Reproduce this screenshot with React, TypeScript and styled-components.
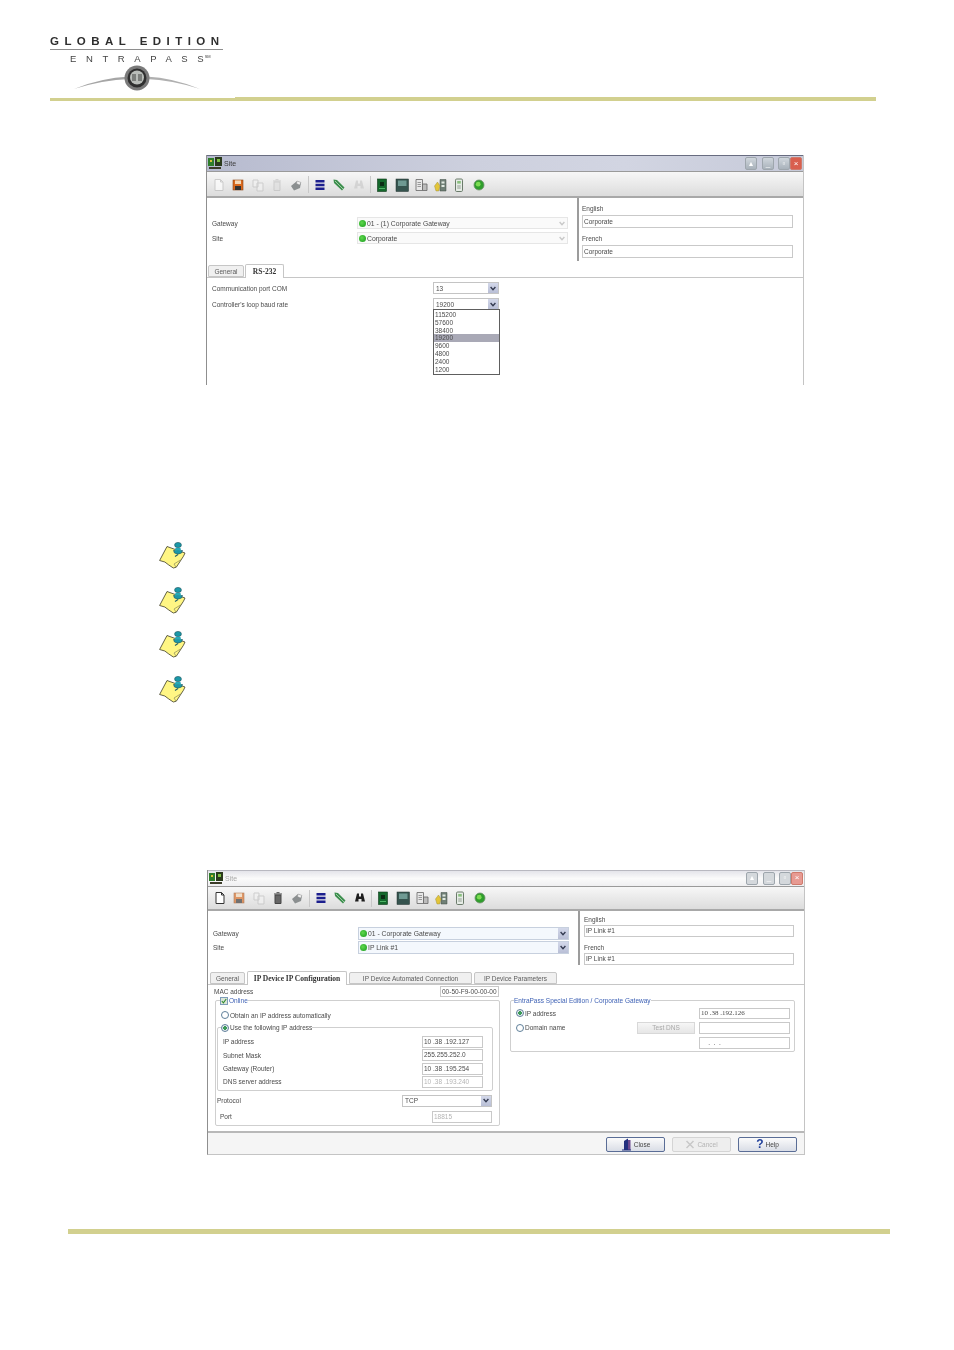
import React from "react";
import styled, { createGlobalStyle } from "styled-components";

const GlobalStyle = createGlobalStyle`
  html, body { margin: 0; padding: 0; background: #fff; }
`;

const Page = styled.div`
  width: 954px;
  height: 1350px;
  display: flex;
  flex-direction: column;
  background: #fff;
  overflow: hidden;
  font-family: "Liberation Sans", Arial, sans-serif;
`;

/* ---------- header ---------- */
const Header = styled.header`
  padding: 35px 78px 0 50px;
`;

const Logo = styled.div`
  width: 173px;
  height: 62px;
  display: flex;
  flex-direction: column;
  align-items: center;
  filter: blur(0.45px);
  color: #2e2e2e;
`;

const LogoTop = styled.div`
  width: 100%;
  height: 14px;
  line-height: 13px;
  font-size: 11.5px;
  font-weight: 700;
  letter-spacing: 5.45px;
  white-space: nowrap;
  border-bottom: 1px solid #8e8e8e;
`;

const LogoName = styled.div`
  margin-top: 3px;
  width: 100%;
  box-sizing: border-box;
  padding-left: 20px;
  height: 11px;
  line-height: 11px;
  font-size: 9.5px;
  letter-spacing: 9.6px;
  white-space: nowrap;
  color: #444;
`;

const LogoLastLetter = styled.span`
  letter-spacing: 1px;
`;

const LogoTm = styled.sup`
  font-size: 4px;
  letter-spacing: 0;
  vertical-align: 4px;
  line-height: 0;
`;

const LogoMark = styled.svg`
  width: 130px;
  height: 33px;
`;

const HeaderRule = styled.div`
  display: flex;
  align-items: flex-end;
`;

const RuleLeft = styled.div`
  width: 185px;
  height: 3px;
  background: #d2d08f;
`;

const RuleRight = styled.div`
  flex: 1;
  height: 4px;
  background: #d2d08f;
`;

const FooterRule = styled.div`
  margin: 74px 0 0 68px;
  width: 822px;
  height: 5px;
  background: #d2d08f;
`;

/* ---------- window frame ---------- */
const Window = styled.section<{ $left: number; $top: number; $height: number; $closed?: boolean }>`
  margin: ${(p) => p.$top}px 0 0 ${(p) => p.$left}px;
  width: 598px;
  height: ${(p) => p.$height}px;
  box-sizing: border-box;
  flex-shrink: 0;
  display: flex;
  flex-direction: column;
  background: #fff;
  border-left: 1px solid #8f8f8f;
  border-right: 1px solid #c4c4c4;
  border-bottom: ${(p) => (p.$closed ? "1px solid #c4c4c4" : "none")};
  filter: blur(0.5px);
  font-size: 6.5px;
  color: #4a4a4a;
`;

const TitleBar = styled.div<{ $inactive?: boolean }>`
  height: 17px;
  flex-shrink: 0;
  box-sizing: border-box;
  display: flex;
  align-items: center;
  padding: 0 1px;
  border-top: 1px solid ${(p) => (p.$inactive ? "#b8b8c0" : "#686c80")};
  border-bottom: 1px solid #9a9a9a;
  background: ${(p) =>
    p.$inactive
      ? "linear-gradient(#e4e4ea, #fafafa 50%, #efeff1)"
      : "linear-gradient(90deg, #b7bbcf, #cdd0de 45%, #d2d5e2 70%, #c6cad9)"};
`;

const TitleText = styled.span<{ $inactive?: boolean }>`
  margin-left: 2px;
  flex: 1;
  font-size: 7px;
  color: ${(p) => (p.$inactive ? "#a8a8a8" : "#3c3c3c")};
`;

const WinButtons = styled.div`
  display: flex;
  align-items: center;
`;

const WinButton = styled.span<{ $close?: boolean; $gap: number; $inactive?: boolean }>`
  display: flex;
  align-items: center;
  justify-content: center;
  width: 12px;
  height: 13px;
  margin-left: ${(p) => p.$gap}px;
  box-sizing: border-box;
  border: 1px solid ${(p) => (p.$close ? "#cf7a6c" : "#9ea6ad")};
  border-radius: 2px;
  background: ${(p) =>
    p.$close
      ? p.$inactive
        ? "#e79a92"
        : "#d95f4e"
      : p.$inactive
        ? "#d4d8dc"
        : "linear-gradient(#cfd6dc, #a9b2bb)"};
  color: #fff;
  font-size: 8px;
  line-height: 1;
`;

const Toolbar = styled.div<{ $height: number }>`
  height: ${(p) => p.$height}px;
  flex-shrink: 0;
  box-sizing: border-box;
  display: flex;
  align-items: center;
  padding: 1px 0 0 2.5px;
  border-bottom: 2px solid #a8a8a8;
  background: linear-gradient(#f7f7f7, #dcdcdc);
`;

const ToolSlot = styled.span`
  width: 19.3px;
  height: 16px;
  display: flex;
  align-items: center;
  justify-content: center;
  flex-shrink: 0;
`;

const ToolDivider = styled.span`
  width: 1px;
  height: 17px;
  margin: 0 1.7px;
  background: #c8c8c8;
`;

const TopArea = styled.div<{ $height: number }>`
  height: ${(p) => p.$height}px;
  flex-shrink: 0;
  display: grid;
  grid-template-columns: 370px 1fr;
`;

const EntityForm = styled.div<{ $top: number; $gap: number }>`
  padding: ${(p) => p.$top}px 0 0 5px;
  display: grid;
  grid-template-columns: 145px 211px;
  grid-auto-rows: min-content;
  row-gap: ${(p) => p.$gap}px;
  align-items: center;
`;

const NameColumn = styled.div<{ $top: number; $inset: number }>`
  padding: ${(p) => p.$top}px 0 0 ${(p) => p.$inset}px;
  border-left: 2px solid #9c9c9c;
  margin-bottom: 2px;
`;

const NameLabel = styled.div<{ $after: number; $before?: number }>`
  height: 9px;
  line-height: 9px;
  margin: ${(p) => p.$before ?? 0}px 0 ${(p) => p.$after}px;
`;

const TextInput = styled.div<{
  $width?: number;
  $height?: number;
  $disabled?: boolean;
  $serif?: boolean;
}>`
  width: ${(p) => (p.$width ? `${p.$width}px` : "auto")};
  height: ${(p) => p.$height ?? 13}px;
  line-height: ${(p) => (p.$height ?? 13) - 2}px;
  box-sizing: border-box;
  padding: 0 1px;
  background: #fff;
  border: 1px solid #c9c9c9;
  white-space: nowrap;
  overflow: hidden;
  color: ${(p) => (p.$disabled ? "#b4b4b4" : "#4a4a4a")};
  font-family: ${(p) => (p.$serif ? '"Liberation Serif", serif' : "inherit")};
  font-size: ${(p) => (p.$serif ? 7 : 6.5)}px;
`;

const EntitySelect = styled.div<{ $active?: boolean; $height: number }>`
  height: ${(p) => p.$height}px;
  box-sizing: border-box;
  display: flex;
  align-items: center;
  gap: 1px;
  font-size: 6.8px;
  background: ${(p) => (p.$active ? "#f4f8fd" : "#fafafa")};
  border: 1px solid ${(p) => (p.$active ? "#c7d0de" : "#e6e6e6")};
`;

const GreenDot = styled.span`
  width: 7px;
  height: 7px;
  margin-left: 1px;
  border-radius: 50%;
  flex-shrink: 0;
  background: radial-gradient(circle at 40% 40%, #5fd84e, #179a1b);
`;

const SelectText = styled.span`
  flex: 1;
  white-space: nowrap;
`;

const Arrow = styled.span<{ $faded?: boolean }>`
  width: 10px;
  height: 100%;
  flex-shrink: 0;
  display: flex;
  align-items: center;
  justify-content: center;
  background: ${(p) => (p.$faded ? "transparent" : "linear-gradient(#d3d8ea, #b9bfd6)")};
  color: ${(p) => (p.$faded ? "#c8c8c8" : "#333a50")};

  svg {
    width: 6px;
    height: 5px;
  }
`;

const TabStrip = styled.div<{ $height: number; $inset: number; $gap: number }>`
  height: ${(p) => p.$height}px;
  flex-shrink: 0;
  box-sizing: border-box;
  display: flex;
  align-items: flex-end;
  padding-left: ${(p) => p.$inset}px;
  gap: ${(p) => p.$gap}px;
`;

const Tab = styled.div<{ $width: number; $active?: boolean }>`
  width: ${(p) => p.$width}px;
  height: ${(p) => (p.$active ? 14 : 12)}px;
  box-sizing: border-box;
  text-align: center;
  white-space: nowrap;
  line-height: ${(p) => (p.$active ? 13 : 11)}px;
  background: ${(p) => (p.$active ? "#fff" : "#f0f0f0")};
  border: 1px solid #c6c6c6;
  border-bottom: ${(p) => (p.$active ? "none" : "1px solid #c6c6c6")};
  border-radius: 2px 2px 0 0;
  margin-bottom: ${(p) => (p.$active ? -1 : 0)}px;
  position: relative;
  font-family: ${(p) => (p.$active ? '"Liberation Serif", serif' : "inherit")};
  font-weight: ${(p) => (p.$active ? 700 : 400)};
  font-size: ${(p) => (p.$active ? 7.5 : 6.5)}px;
  color: ${(p) => (p.$active ? "#333" : "#5a5a5a")};
`;

const TabPanel = styled.div`
  flex: 1;
  min-height: 0;
  box-sizing: border-box;
  border-top: 1px solid #c6c6c6;
`;

/* ---------- RS-232 panel ---------- */
const SerialForm = styled.div`
  padding: 4px 0 0 5px;
  display: grid;
  grid-template-columns: 221px 66px;
  row-gap: 4px;
  align-items: center;
`;

const ComboBox = styled.div<{ $width?: number }>`
  position: relative;
  width: ${(p) => (p.$width ? `${p.$width}px` : "auto")};
  height: 12px;
  box-sizing: border-box;
  display: flex;
  align-items: center;
  padding-left: 2px;
  background: #fff;
  border: 1px solid #c4c4c4;
`;

const ComboList = styled.ul`
  position: absolute;
  z-index: 2;
  top: 100%;
  left: -1px;
  width: 67px;
  box-sizing: border-box;
  margin: 0;
  padding: 1px 0;
  list-style: none;
  background: #fff;
  border: 1px solid #5e5e5e;
`;

const ComboItem = styled.li<{ $selected?: boolean }>`
  height: 7.8px;
  line-height: 7.8px;
  padding-left: 1px;
  background: ${(p) => (p.$selected ? "#a9a9b6" : "transparent")};
`;

/* ---------- IP configuration panel ---------- */
const MacRow = styled.div`
  padding: 1px 0 0 6px;
  width: 285px;
  box-sizing: content-box;
  display: flex;
  align-items: center;
  justify-content: space-between;
`;

const Columns = styled.div`
  display: flex;
  align-items: flex-start;
  gap: 10px;
  padding-left: 7px;
`;

const Group = styled.fieldset<{ $height: number }>`
  width: 285px;
  height: ${(p) => p.$height}px;
  box-sizing: border-box;
  min-inline-size: 0;
  margin: 0;
  padding: 0;
  border: 1px solid #cfcfcf;
  border-radius: 2px;
`;

const GroupLegend = styled.legend<{ $blue?: boolean; $offset: number }>`
  display: flex;
  align-items: center;
  gap: 1px;
  height: 8px;
  line-height: 8px;
  padding: 0;
  margin-left: ${(p) => p.$offset}px;
  background: #fff;
  color: ${(p) => (p.$blue ? "#3f62b5" : "inherit")};
`;

const CheckBox = styled.span`
  width: 8px;
  height: 8px;
  box-sizing: border-box;
  border: 1px solid #7f9db9;
  background: #dbe6d8;
  display: flex;
  align-items: center;
  justify-content: center;
  color: #2f8a2f;

  svg {
    width: 6px;
    height: 6px;
  }
`;

const Radio = styled.span<{ $checked?: boolean }>`
  width: 8px;
  height: 8px;
  box-sizing: border-box;
  flex-shrink: 0;
  border: 1px solid #5f7f9a;
  border-radius: 50%;
  background: ${(p) =>
    p.$checked ? "radial-gradient(circle, #3c9a58 0 1.6px, #e9eef2 2px)" : "#fff"};
`;

const RadioRow = styled.div<{ $top?: number; $inset?: number }>`
  display: flex;
  align-items: center;
  gap: 1px;
  height: 9px;
  white-space: nowrap;
  margin: ${(p) => p.$top ?? 0}px 0 0 ${(p) => p.$inset ?? 0}px;
`;

const AddressGroup = styled.fieldset`
  width: 276px;
  height: 67px;
  box-sizing: border-box;
  min-inline-size: 0;
  margin: 4px 0 0 1px;
  padding: 4px 9px 0 5px;
  border: 1px solid #cfcfcf;
  border-radius: 2px;
`;

const AddressRow = styled.div`
  display: flex;
  align-items: center;
  justify-content: space-between;
  height: 12px;
  margin-bottom: 1.4px;
`;

const TransportRow = styled.div<{ $top: number; $inset: number }>`
  display: flex;
  align-items: center;
  justify-content: space-between;
  width: ${(p) => 276 - p.$inset}px;
  margin: ${(p) => p.$top}px 0 0 ${(p) => p.$inset}px;
`;

const GatewayGrid = styled.div`
  display: grid;
  grid-template-columns: 117px 58px 91px;
  column-gap: 4px;
  row-gap: 3px;
  align-items: center;
  padding: 3px 0 0 5px;
`;

const TestButton = styled.div`
  height: 12px;
  line-height: 10px;
  box-sizing: border-box;
  text-align: center;
  color: #a9a9a9;
  background: linear-gradient(#f6f6f6, #e6e6e6);
  border: 1px solid #d8d8d8;
`;

const LastCell = styled.div`
  grid-column: 3;
`;

const ActionBar = styled.div`
  height: 23px;
  flex-shrink: 0;
  box-sizing: border-box;
  display: flex;
  justify-content: flex-end;
  align-items: flex-start;
  gap: 7px;
  padding: 4px 7px 0 0;
  background: #f5f5f5;
  border-top: 2px solid #b8b8b8;
`;

const ActionButton = styled.div<{ $disabled?: boolean }>`
  width: 59px;
  height: 15px;
  box-sizing: border-box;
  display: flex;
  align-items: center;
  justify-content: center;
  gap: 2px;
  border: 1px solid ${(p) => (p.$disabled ? "#d4d4d4" : "#5a6d96")};
  border-radius: 2px;
  background: ${(p) => (p.$disabled ? "#eeeeee" : "linear-gradient(#fbfbfb, #d9dde6)")};
  color: ${(p) => (p.$disabled ? "#b4b4b4" : "#444")};
`;

const HelpMark = styled.span`
  color: #1f3f9a;
  font-size: 12px;
  line-height: 12px;
  font-weight: 700;
`;

/* ---------- notes ---------- */
const NoteList = styled.div`
  margin: 157px 0 0 159px;
  display: flex;
  flex-direction: column;
  gap: 16.6px;
`;

const NoteIcon = styled.svg`
  display: block;
  width: 28px;
  height: 28px;
`;

/* ---------- drawings ---------- */
type ToolKind =
  | "page"
  | "save"
  | "copy"
  | "trash"
  | "print"
  | "list"
  | "pen"
  | "binoculars"
  | "board"
  | "film"
  | "server"
  | "tree"
  | "device"
  | "status"
  | "divider";

const ToolGlyph = ({ kind, faded }: { kind: ToolKind; faded?: boolean }) => {
  const shapes: Record<string, React.ReactNode> = {
    page: (
      <path d="M3 1.5h5.5L11 4v8.5H3z M8.5 1.5V4H11" fill="#fff" stroke={faded ? "#bbb" : "#333"} />
    ),
    save: (
      <>
        <rect x="2" y="2" width="10" height="10" fill="#d9691e" stroke="#8a4516" strokeWidth="0.6" />
        <rect x="4" y="2.4" width="6" height="3.6" fill="#f4d9b8" />
        <rect x="4" y="8" width="6" height="4" fill="#333" />
      </>
    ),
    copy: <path d="M2 2h5v7H2z M6 5h6v8H6z" fill="#f2f2f2" stroke="#bdbdbd" />,
    trash: (
      <path
        d="M4 4h6v8.5H4z M3 3h8 M5.5 1.7h3"
        fill={faded ? "#dedede" : "#666"}
        stroke={faded ? "#bdbdbd" : "#444"}
      />
    ),
    print: (
      <>
        <path d="M2 8l6-5 4 1.5-1 5.5-6 2.5z" fill="#8b8f90" />
        <path d="M8 3l4 1.5-1.5 2.5-3-1.5z" fill="#f0f0f0" stroke="#888" strokeWidth="0.4" />
      </>
    ),
    list: <path d="M2.5 2h9v2.4h-9z M2.5 5.8h9v2.4h-9z M2.5 9.6h9V12h-9z" fill="#1c1f8e" />,
    pen: (
      <>
        <path d="M1.5 1.5l3.5.5 7.5 7.5-2.5 3L2 5z" fill="#3c8f4d" />
        <path d="M3 3l8 8" stroke="#b9d8bd" strokeWidth="0.8" />
      </>
    ),
    binoculars: (
      <path d="M4 2.5h2v3h2v-3h2l2 8H8.5V8h-3v2.5H2z" fill={faded ? "#c9c9c9" : "#1e1e1e"} />
    ),
    board: (
      <>
        <rect x="2.5" y="1" width="9" height="12.5" fill="#14682c" stroke="#0c3a18" strokeWidth="0.6" />
        <rect x="5" y="4" width="4" height="4" fill="#0b2d14" />
        <path d="M4 10.5h6" stroke="#4fb567" />
      </>
    ),
    film: (
      <>
        <rect x="1" y="1" width="12.5" height="12.5" fill="#36544f" stroke="#20302e" strokeWidth="0.5" />
        <rect x="3" y="2.5" width="8.5" height="5.5" fill="#6f9a93" />
      </>
    ),
    server: (
      <>
        <path d="M2 1.5h6.5v11H2z" fill="#e8e8e8" stroke="#666" strokeWidth="0.8" />
        <path d="M8.5 6h4.5v6.5H8.5z" fill="#bcbcbc" stroke="#666" strokeWidth="0.8" />
        <path d="M3.5 4.5h3.5M3.5 6.5h3.5M3.5 8.5h3.5" stroke="#777" strokeWidth="0.7" />
      </>
    ),
    tree: (
      <>
        <path d="M7 1.5h6v11.5H7z" fill="#6f7f76" stroke="#3c4a42" strokeWidth="0.5" />
        <path d="M8.5 3.5h3v2h-3z M8.5 7h3v2h-3z" fill="#dfe8e0" />
        <path d="M1.5 8l3-4 2.5 4-1.3 5H3z" fill="#e3c53a" stroke="#8f8330" strokeWidth="0.4" />
      </>
    ),
    device: (
      <>
        <rect x="3.5" y="1" width="7" height="12.5" rx="1.2" fill="#e6ece6" stroke="#6b7b6b" />
        <rect x="5.2" y="3" width="3.6" height="2.6" fill="#8abf7f" />
        <path d="M5.2 8h3.6M5.2 10h3.6" stroke="#7c8c7c" strokeWidth="0.8" />
      </>
    ),
    status: (
      <>
        <circle cx="7" cy="7" r="5" fill="#2f9e2c" stroke="#6d8f6a" strokeWidth="0.8" />
        <circle cx="6.2" cy="6.2" r="2.4" fill="#7cdc52" />
      </>
    ),
  };
  return (
    <svg width="14" height="14" viewBox="0 0 14 14" style={{ opacity: faded ? 0.65 : 1 }}>
      {shapes[kind]}
    </svg>
  );
};

const WindowGlyph = () => (
  <svg width="14" height="13" viewBox="0 0 14 13">
    <rect x="0" y="1" width="6" height="8" fill="#2f7d2a" />
    <rect x="7" y="0" width="7" height="9" fill="#2b3a1c" />
    <rect x="2" y="3" width="2" height="2" fill="#d6c23b" />
    <rect x="9" y="2" width="3" height="3" fill="#7bc043" />
    <rect x="1" y="10" width="12" height="2" fill="#3c3c28" />
  </svg>
);

const ChevronDown = () => (
  <svg viewBox="0 0 6 5">
    <path d="M.6 1l2.4 2.6L5.4 1" fill="none" stroke="currentColor" strokeWidth="1.4" />
  </svg>
);

const DoorGlyph = () => (
  <svg width="11" height="13" viewBox="0 0 11 13">
    <path d="M3 12V3l4-2.5V12z" fill="#23307f" />
    <path d="M7 2h2.5v10H7z" fill="#6d4a8f" />
    <path d="M1 12h9" stroke="#23307f" />
  </svg>
);

const CancelGlyph = () => (
  <svg width="10" height="11" viewBox="0 0 10 11">
    <path d="M1.5 2l7 7M8.5 2l-7 7" stroke="#c8c8c8" strokeWidth="1.5" />
  </svg>
);

const NoteGlyph = () => (
  <NoteIcon viewBox="0 0 28 28">
    <path
      d="M.6 18.5 8 4.5 26 11l-1.5 3.2-7.2 11-3 .8-4.5-3-4-3z"
      fill="#fff684"
      stroke="#3c3c28"
      strokeWidth="0.8"
    />
    <path d="M17 25l-2-3 6.5-4" fill="none" stroke="#8a8a5c" strokeWidth="0.7" />
    <path d="M19 12.5l-3 2" stroke="#25606a" strokeWidth="1.2" />
    <path d="M14.5 8.5h9l-1 2.5q-3.4 2.2-7 0z" fill="#1b98a8" stroke="#17505a" strokeWidth="0.6" />
    <path d="M16.5 6h5l.6 2.8h-6.2z" fill="#26a9b8" />
    <ellipse cx="19" cy="3" rx="3.4" ry="2.6" fill="#1b98a8" stroke="#17505a" strokeWidth="0.6" />
  </NoteIcon>
);

const ToolRow = ({ items, height }: { items: [ToolKind, boolean][]; height: number }) => (
  <Toolbar $height={height}>
    {items.map(([kind, faded], i) =>
      kind === "divider" ? (
        <ToolDivider key={i} />
      ) : (
        <ToolSlot key={i}>
          <ToolGlyph kind={kind} faded={faded} />
        </ToolSlot>
      )
    )}
  </Toolbar>
);

const WindowTitle = ({ inactive }: { inactive?: boolean }) => (
  <TitleBar $inactive={inactive}>
    <WindowGlyph />
    <TitleText $inactive={inactive}>Site</TitleText>
    <WinButtons>
      <WinButton $gap={0} $inactive={inactive}>
        ▴
      </WinButton>
      <WinButton $gap={5} $inactive={inactive}>
        _
      </WinButton>
      <WinButton $gap={4} $inactive={inactive}>
        ▫
      </WinButton>
      <WinButton $gap={0} $close $inactive={inactive}>
        ×
      </WinButton>
    </WinButtons>
  </TitleBar>
);

const firstTools: [ToolKind, boolean][] = [
  ["page", true],
  ["save", false],
  ["copy", true],
  ["trash", true],
  ["print", false],
  ["divider", false],
  ["list", false],
  ["pen", false],
  ["binoculars", true],
  ["divider", false],
  ["board", false],
  ["film", false],
  ["server", false],
  ["tree", false],
  ["device", false],
  ["status", false],
];

const secondTools: [ToolKind, boolean][] = [
  ["page", false],
  ["save", true],
  ["copy", true],
  ["trash", false],
  ["print", false],
  ["divider", false],
  ["list", false],
  ["pen", false],
  ["binoculars", false],
  ["divider", false],
  ["board", false],
  ["film", false],
  ["server", false],
  ["tree", false],
  ["device", false],
  ["status", false],
];

const baudRates = ["115200", "57600", "38400", "19200", "9600", "4800", "2400", "1200"];

const addressRows: [string, string, boolean][] = [
  ["IP address", "10 .38 .192.127", false],
  ["Subnet Mask", "255.255.252.0", false],
  ["Gateway (Router)", "10 .38 .195.254", false],
  ["DNS server address", "10 .38 .193.240", true],
];

const App = () => {
  return (
    <Page>
      <GlobalStyle />
      <Header>
        <Logo>
          <LogoTop>GLOBAL EDITION</LogoTop>
          <LogoName>
            ENTRAPAS
            <LogoLastLetter>S</LogoLastLetter>
            <LogoTm>SM</LogoTm>
          </LogoName>
          <LogoMark viewBox="0 0 130 33">
            <path d="M2 25Q28 14 58 12.5L58 15Q30 16 2 25z" fill="#a6a6a6" />
            <path d="M128 25Q102 14 74 12.5L74 15Q100 16 128 25z" fill="#b0b0b0" />
            <circle cx="65" cy="14" r="12.5" fill="#7a7a7a" />
            <circle cx="65" cy="14" r="9.5" fill="#2f2f2f" />
            <circle cx="65" cy="13.5" r="7" fill="#b9bdb9" />
            <path d="M60 17v-7h4v7z M66 17v-7h4v7z" fill="#7c7f7c" />
          </LogoMark>
        </Logo>
        <HeaderRule>
          <RuleLeft />
          <RuleRight />
        </HeaderRule>
      </Header>

      <Window $left={206} $top={54} $height={230}>
        <WindowTitle />
        <ToolRow items={firstTools} height={26} />
        <TopArea $height={65}>
          <EntityForm $top={19} $gap={3}>
            <span>Gateway</span>
            <EntitySelect $height={12}>
              <GreenDot />
              <SelectText>01 - (1) Corporate Gateway</SelectText>
              <Arrow $faded>
                <ChevronDown />
              </Arrow>
            </EntitySelect>
            <span>Site</span>
            <EntitySelect $height={12}>
              <GreenDot />
              <SelectText>Corporate</SelectText>
              <Arrow $faded>
                <ChevronDown />
              </Arrow>
            </EntitySelect>
          </EntityForm>
          <NameColumn $top={6} $inset={3}>
            <NameLabel $after={2}>English</NameLabel>
            <TextInput $width={211}>Corporate</TextInput>
            <NameLabel $before={6} $after={2}>
              French
            </NameLabel>
            <TextInput $width={211}>Corporate</TextInput>
          </NameColumn>
        </TopArea>
        <TabStrip $height={14} $inset={1} $gap={1}>
          <Tab $width={36}>General</Tab>
          <Tab $width={39} $active>
            RS-232
          </Tab>
        </TabStrip>
        <TabPanel>
          <SerialForm>
            <span>Communication port COM</span>
            <ComboBox>
              <SelectText>13</SelectText>
              <Arrow>
                <ChevronDown />
              </Arrow>
            </ComboBox>
            <span>Controller's loop baud rate</span>
            <ComboBox>
              <SelectText>19200</SelectText>
              <Arrow>
                <ChevronDown />
              </Arrow>
              <ComboList>
                {baudRates.map((rate) => (
                  <ComboItem key={rate} $selected={rate === "19200"}>
                    {rate}
                  </ComboItem>
                ))}
              </ComboList>
            </ComboBox>
          </SerialForm>
        </TabPanel>
      </Window>

      <NoteList>
        <NoteGlyph />
        <NoteGlyph />
        <NoteGlyph />
        <NoteGlyph />
      </NoteList>

      <Window $left={207} $top={166} $height={285} $closed>
        <WindowTitle inactive />
        <ToolRow items={secondTools} height={24} />
        <TopArea $height={56}>
          <EntityForm $top={16} $gap={1}>
            <span>Gateway</span>
            <EntitySelect $height={13} $active>
              <GreenDot />
              <SelectText>01 - Corporate Gateway</SelectText>
              <Arrow>
                <ChevronDown />
              </Arrow>
            </EntitySelect>
            <span>Site</span>
            <EntitySelect $height={13} $active>
              <GreenDot />
              <SelectText>IP Link #1</SelectText>
              <Arrow>
                <ChevronDown />
              </Arrow>
            </EntitySelect>
          </EntityForm>
          <NameColumn $top={4} $inset={4}>
            <NameLabel $after={1}>English</NameLabel>
            <TextInput $width={210} $height={12}>
              IP Link #1
            </TextInput>
            <NameLabel $before={6} $after={1}>
              French
            </NameLabel>
            <TextInput $width={210} $height={12}>
              IP Link #1
            </TextInput>
          </NameColumn>
        </TopArea>
        <TabStrip $height={17} $inset={2} $gap={2}>
          <Tab $width={35}>General</Tab>
          <Tab $width={100} $active>
            IP Device IP Configuration
          </Tab>
          <Tab $width={123}>IP Device Automated Connection</Tab>
          <Tab $width={83}>IP Device Parameters</Tab>
        </TabStrip>
        <TabPanel>
          <MacRow>
            <span>MAC address</span>
            <TextInput $width={59} $height={11}>
              00-50-F9-00-00-00
            </TextInput>
          </MacRow>
          <Columns>
            <Group $height={129}>
              <GroupLegend $blue $offset={4}>
                <CheckBox>
                  <svg viewBox="0 0 6 6">
                    <path d="M.8 3l1.6 1.8L5.2 1" fill="none" stroke="currentColor" strokeWidth="1.1" />
                  </svg>
                </CheckBox>
                Online
              </GroupLegend>
              <RadioRow $top={6} $inset={5}>
                <Radio />
                Obtain an IP address automatically
              </RadioRow>
              <AddressGroup>
                <GroupLegend $offset={-2}>
                  <Radio $checked />
                  Use the following IP address
                </GroupLegend>
                {addressRows.map(([label, value, disabled]) => (
                  <AddressRow key={label}>
                    <span>{label}</span>
                    <TextInput $width={61} $height={12} $disabled={disabled}>
                      {value}
                    </TextInput>
                  </AddressRow>
                ))}
              </AddressGroup>
              <TransportRow $top={4} $inset={1}>
                <span>Protocol</span>
                <ComboBox $width={90}>
                  <SelectText>TCP</SelectText>
                  <Arrow>
                    <ChevronDown />
                  </Arrow>
                </ComboBox>
              </TransportRow>
              <TransportRow $top={4} $inset={4}>
                <span>Port</span>
                <TextInput $width={60} $height={12} $disabled>
                  18815
                </TextInput>
              </TransportRow>
            </Group>
            <Group $height={55}>
              <GroupLegend $blue $offset={3}>
                EntraPass Special Edition / Corporate Gateway
              </GroupLegend>
              <GatewayGrid>
                <RadioRow>
                  <Radio $checked />
                  IP address
                </RadioRow>
                <span />
                <TextInput $height={11} $serif>
                  10 .38 .192.126
                </TextInput>
                <RadioRow>
                  <Radio />
                  Domain name
                </RadioRow>
                <TestButton>Test DNS</TestButton>
                <TextInput $height={12} />
                <LastCell>
                  <TextInput $height={12}>&nbsp;&nbsp;&nbsp;&nbsp;.&nbsp;&nbsp;.&nbsp;&nbsp;.</TextInput>
                </LastCell>
              </GatewayGrid>
            </Group>
          </Columns>
        </TabPanel>
        <ActionBar>
          <ActionButton>
            <DoorGlyph />
            Close
          </ActionButton>
          <ActionButton $disabled>
            <CancelGlyph />
            Cancel
          </ActionButton>
          <ActionButton>
            <HelpMark>?</HelpMark>
            Help
          </ActionButton>
        </ActionBar>
      </Window>

      <FooterRule />
    </Page>
  );
};

export default App;
